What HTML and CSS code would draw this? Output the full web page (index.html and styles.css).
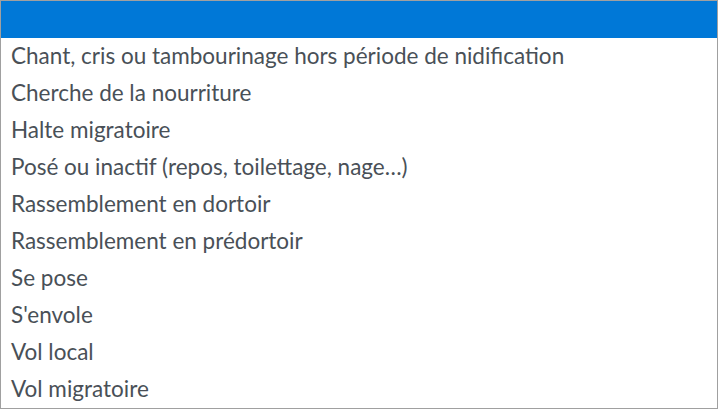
FILE: index.html
```html
<!DOCTYPE html>
<html lang="fr">
<head>
<meta charset="utf-8">
<link rel="stylesheet" href="styles.css">
</head>
<body>
<div class="listbox">
  <div class="option selected">&nbsp;</div>
  <div class="option">Chant, cris ou tambourinage hors période de nidification</div>
  <div class="option">Cherche de la nourriture</div>
  <div class="option">Halte migratoire</div>
  <div class="option">Posé ou inactif (repos, toilettage, nage…)</div>
  <div class="option">Rassemblement en dortoir</div>
  <div class="option">Rassemblement en prédortoir</div>
  <div class="option">Se pose</div>
  <div class="option">S'envole</div>
  <div class="option">Vol local</div>
  <div class="option">Vol migratoire</div>
</div>
</body>
</html>
```
FILE: styles.css
```css
html, body {
  margin: 0;
  padding: 0;
  background: #fff;
}
.listbox {
  width: 716px;
  border: 1px solid #a0a0a0;
  background: #fff;
  font-family: Lato, "Liberation Sans", sans-serif;
  font-size: 22.5px;
  color: #495057;
}
.option {
  height: 35px;
  line-height: 35px;
  padding: 0 10px 2px;
  white-space: nowrap;
}
.option.selected {
  background: #0078d7;
  color: #fff;
}
```
